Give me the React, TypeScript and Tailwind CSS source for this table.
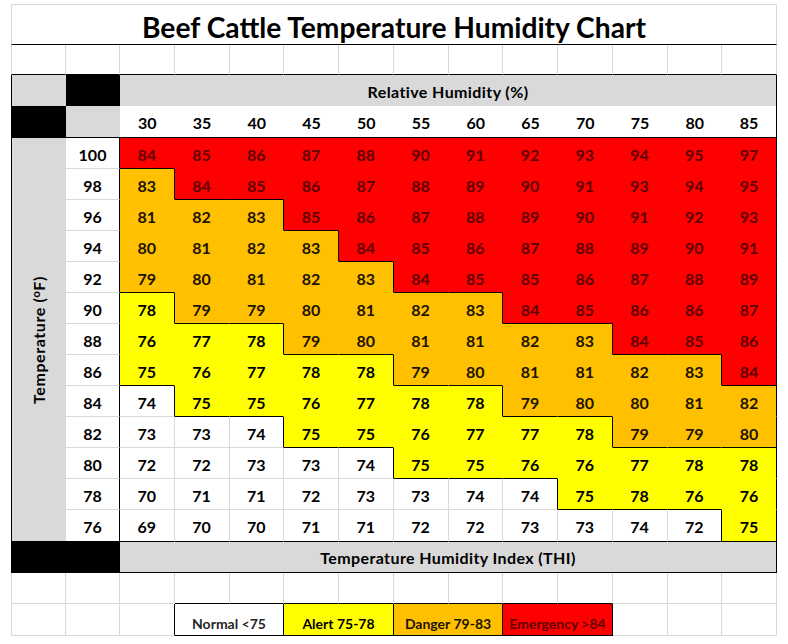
type Cat = "w" | "y" | "o" | "r"

const humidity = [30, 35, 40, 45, 50, 55, 60, 65, 70, 75, 80, 85]

const rows: [number, number[], string][] = [
  [100, [84, 85, 86, 87, 88, 90, 91, 92, 93, 94, 95, 97], "rrrrrrrrrrrr"],
  [98, [83, 84, 85, 86, 87, 88, 89, 90, 91, 93, 94, 95], "orrrrrrrrrrr"],
  [96, [81, 82, 83, 85, 86, 87, 88, 89, 90, 91, 92, 93], "ooorrrrrrrrr"],
  [94, [80, 81, 82, 83, 84, 85, 86, 87, 88, 89, 90, 91], "oooorrrrrrrr"],
  [92, [79, 80, 81, 82, 83, 84, 85, 85, 86, 87, 88, 89], "ooooorrrrrrr"],
  [90, [78, 79, 79, 80, 81, 82, 83, 84, 85, 86, 86, 87], "yoooooorrrrr"],
  [88, [76, 77, 78, 79, 80, 81, 81, 82, 83, 84, 85, 86], "yyyoooooorrr"],
  [86, [75, 76, 77, 78, 78, 79, 80, 81, 81, 82, 83, 84], "yyyyyoooooor"],
  [84, [74, 75, 75, 76, 77, 78, 78, 79, 80, 80, 81, 82], "wyyyyyyooooo"],
  [82, [73, 73, 74, 75, 75, 76, 77, 77, 78, 79, 79, 80], "wwwyyyyyyooo"],
  [80, [72, 72, 73, 73, 74, 75, 75, 76, 76, 77, 78, 78], "wwwwwyyyyyyy"],
  [78, [70, 71, 71, 72, 73, 73, 74, 74, 75, 78, 76, 76], "wwwwwwwwyyyy"],
  [76, [69, 70, 70, 71, 71, 72, 72, 73, 73, 74, 72, 75], "wwwwwwwwwwwy"],
]

const fill: Record<Cat, string> = {
  w: "bg-white text-black",
  y: "bg-[#ffff00] text-black",
  o: "bg-[#ffc000] text-[#1c1300]",
  r: "bg-[#ff0000] text-[#5e0000]",
}

function DataCell({ r, c }: { r: number; c: number }) {
  const cat = rows[r][2][c] as Cat
  const right = c === 11 ? null : (rows[r][2][c + 1] as Cat)
  const below = r === rows.length - 1 ? null : (rows[r + 1][2][c] as Cat)

  // Excel look: black line where the band changes, grey gridline on white, none on fills
  const rb =
    right === null || right !== cat
      ? "border-r-black"
      : cat === "w"
        ? "border-r-[#d9d9d9]"
        : "border-r-transparent"
  const bb =
    below === null || below !== cat
      ? "border-b-black"
      : cat === "w"
        ? "border-b-[#d9d9d9]"
        : "border-b-transparent"

  return (
    <div className={`flex items-center justify-center pt-[3px] border-r border-b text-[16px] font-bold ${fill[cat]} ${rb} ${bb}`}>
      {rows[r][1][c]}
    </div>
  )
}

export default function App() {
  const blanks = Array.from({ length: 14 })

  return (
    <div className="w-[788px] h-[644px] bg-white pt-[4px] pl-[11px] font-['Lato',sans-serif] text-black">
      <div className="grid w-[766px] grid-cols-[55px_54px_repeat(12,minmax(0,1fr))] grid-rows-[41px_30px_31px_32px_repeat(12,31px)_32px_31px_31px_32px]">
        {/* title */}
        <div className="col-span-14 flex items-center justify-center pt-[5px] border border-[#d9d9d9] border-b-black text-[28.2px] font-bold">
          Beef Cattle Temperature Humidity Chart
        </div>

        {/* spacer row */}
        {blanks.map((_, i) => (
          <div
            key={`s${i}`}
            className={`border-r border-b border-r-[#d9d9d9] border-b-black ${i === 0 ? "border-l border-l-[#d9d9d9]" : ""}`}
          />
        ))}

        {/* relative humidity header */}
        <div className="bg-[#d9d9d9] border-l border-black" />
        <div className="bg-black" />
        <div className="col-span-12 flex items-center justify-center pt-[2px] bg-[#d9d9d9] border-r border-black text-[16px] font-bold tracking-[0.4px]">
          Relative Humidity (%)
        </div>

        {/* humidity values */}
        <div className="bg-black border-l border-b border-black" />
        <div className="bg-[#d9d9d9] border-b border-black" />
        {humidity.map((h, i) => (
          <div
            key={h}
            className={`flex items-center justify-center pt-[3px] border-b border-black text-[16px] font-bold ${i === 11 ? "border-r" : ""}`}
          >
            {h}
          </div>
        ))}

        {/* data */}
        {rows.map((row, r) => (
          <>
            {r === 0 && (
              <div key="axis" className="row-span-13 flex items-center justify-center bg-[#d9d9d9] border-l border-b border-black">
                <span className="-rotate-90 whitespace-nowrap text-[16px] font-bold tracking-[0.6px]">
                  Temperature (<sup className="text-[11px]">o</sup>F)
                </span>
              </div>
            )}
            <div
              key={`t${r}`}
              className={`flex items-center justify-center pt-[3px] border-r border-b border-r-black text-[16px] font-bold ${r === rows.length - 1 ? "border-b-black" : "border-b-[#d9d9d9]"}`}
            >
              {row[0]}
            </div>
            {row[1].map((_, c) => (
              <DataCell key={`${r}-${c}`} r={r} c={c} />
            ))}
          </>
        ))}

        {/* THI footer */}
        <div className="col-span-2 bg-black border-l border-b border-black" />
        <div className="col-span-12 flex items-center justify-center pt-[2px] bg-[#d9d9d9] border-r border-b border-black text-[16px] font-bold tracking-[0.4px]">
          Temperature Humidity Index (THI)
        </div>

        {/* empty row */}
        {blanks.map((_, i) => (
          <div
            key={`e${i}`}
            className={`border-r border-b border-r-[#d9d9d9] ${i >= 3 && i <= 10 ? "border-b-black" : "border-b-[#d9d9d9]"} ${i === 0 ? "border-l border-l-[#d9d9d9]" : ""}`}
          />
        ))}

        {/* legend */}
        <div className="border-l border-r border-b border-[#d9d9d9]" />
        <div className="border-r border-b border-[#d9d9d9]" />
        <div className="border-r border-b border-[#d9d9d9] border-r-black" />
        <div className="col-span-2 flex items-end justify-center pb-[1px] bg-white border-r border-b border-black text-[14px] font-bold text-[#262626]">
          Normal &lt;75
        </div>
        <div className="col-span-2 flex items-end justify-center pb-[1px] bg-[#ffff00] border-r border-b border-black text-[14px] font-bold">
          Alert 75-78
        </div>
        <div className="col-span-2 flex items-end justify-center pb-[1px] bg-[#ffc000] border-r border-b border-black text-[14px] font-bold text-[#1c1300]">
          Danger 79-83
        </div>
        <div className="col-span-2 flex items-end justify-center pb-[1px] bg-[#ff0000] border-r border-b border-black text-[14px] font-bold text-[#5e0000]">
          Emergency &gt;84
        </div>
        <div className="border-r border-b border-[#d9d9d9]" />
        <div className="border-r border-b border-[#d9d9d9]" />
        <div className="border-r border-b border-[#d9d9d9]" />
      </div>
    </div>
  )
}
